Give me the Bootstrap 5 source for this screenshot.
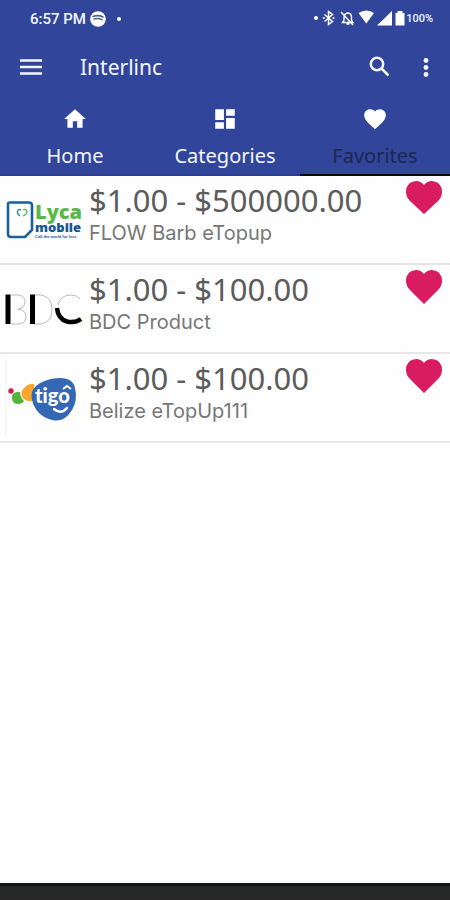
<!DOCTYPE html>
<html lang="en">
<head>
<meta charset="utf-8">
<meta name="viewport" content="width=device-width, initial-scale=1">
<title>Interlinc</title>
<link href="https://cdn.jsdelivr.net/npm/bootstrap@5.3.0/dist/css/bootstrap.min.css" rel="stylesheet">
<style>
body { font-family: "Noto Sans", sans-serif; background: #fefefe; }
svg { display: block; flex: none; }
.app-head { background: #31459b; color: #f4f7ff; }
.status { height: 38px; padding: 0 17px 0 30px; font: 500 15px/20px Roboto, sans-serif; }
.status .pct { font-size: 11px; }
.toolbar { height: 60px; padding: 0 12px 2px 20px; }
.toolbar button { color: inherit; }
.app-name { font-size: 21px; line-height: 30px; margin-left: 38px; }
.tabs a { height: 78px; padding-top: 8px; gap: 10px; color: #f4f7ff; font-size: 20px; line-height: 28px; border-bottom: 2px solid #2b3c96; }
.tabs a.active { border-color: #05070f; }
.tabs a.active span { color: #1d2751; }
.product { height: 89px; border-bottom: 2px solid #e6e6e6; padding: 5px 8px 0 5px; }
.logo { width: 84px; height: 78px; }
.logo text { font-variant-ligatures: none; }
.price { font: 400 31px/38px "Noto Sans", sans-serif; color: #5c5c5c; margin-bottom: 2px; }
.pname { font: 400 20px/24px Inter, sans-serif; color: #777; }
.fav { color: #d91b60; }
.sysbar { height: 17px; background: #282828; border-top: 3px solid #111514; }
</style>
</head>
<body class="d-flex flex-column min-vh-100">
<header class="app-head">
  <div class="status d-flex align-items-center justify-content-between">
    <div class="d-flex align-items-center gap-1">
      <span>6:57 PM</span>
      <svg width="16" height="16" viewBox="0 0 16 16"><circle cx="8" cy="8" r="7.8" fill="#fff"/><path d="M3 5.5q5-2 10 .5M4 8q4-1.300 8 .6" fill="none" stroke="#53608f" stroke-width="1.600" stroke-linecap="round"/></svg>
      <svg width="18" height="16" viewBox="0 0 18 16"><circle cx="9" cy="8" r="2" fill="#fff"/></svg>
    </div>
    <div class="d-flex align-items-center">
      <svg width="92" height="20" viewBox="0 0 92 20" fill="#fff">
        <circle cx="2" cy="9" r="2"/>
        <path d="m10.500 5.500 8 7-4 3V2.500l4 3-8 7" fill="none" stroke="#fff" stroke-width="1.500"/><circle cx="9.800" cy="9" r="1"/><circle cx="19.500" cy="9" r="1"/>
        <path d="M28.500 13.500H39l-1.500-2V8q0-3.500-3.500-4-3.500.5-4 4v3.500zM32.500 15h3M27 3l12 13" fill="none" stroke="#fff" stroke-width="1.400"/>
        <path d="M44.500 4q8-5 15.500 0L52.300 14.500z"/><path d="M63 16.500 78 2v14.500zM81.500 4h2V2h5v2h2v12.500h-9z"/>
      </svg>
      <span class="pct">100%</span>
    </div>
  </div>
  <div class="toolbar d-flex align-items-center">
    <button class="btn border-0 p-0" aria-label="Menu"><svg width="22" height="18" viewBox="0 0 22 18"><path d="M0 2.500h22M0 9h22M0 15.500h22" stroke="currentColor" stroke-width="2.300"/></svg></button>
    <h1 class="app-name fw-normal mb-0 me-auto">Interlinc</h1>
    <button class="btn border-0 p-0 me-4" aria-label="Search"><svg width="24" height="24" viewBox="0 0 24 24" fill="none" stroke="currentColor" stroke-width="2.500"><circle cx="11" cy="9" r="6.200"/><path d="m15.500 13.500 7 7"/></svg></button>
    <button class="btn border-0 p-0" aria-label="More options"><svg width="24" height="24" viewBox="0 0 24 24" fill="currentColor"><circle cx="12" cy="5.500" r="2.400"/><circle cx="12" cy="12.500" r="2.400"/><circle cx="12" cy="19.500" r="2.400"/></svg></button>
  </div>
  <nav class="tabs row g-0 text-center">
    <a href="#home" class="col d-flex flex-column align-items-center text-decoration-none"><svg width="26" height="26" viewBox="0 0 24 24" fill="#fff"><path d="M10 20v-6h4v6h5v-8h3L12 3 2 12h3v8z"/></svg><span>Home</span></a>
    <a href="#categories" class="col d-flex flex-column align-items-center text-decoration-none"><svg width="26" height="26" viewBox="0 0 24 24" fill="#fff"><path d="M3 13h8V3H3zm0 8h8v-6H3zm10 0h8V11h-8zm0-18v6h8V3z"/></svg><span>Categories</span></a>
    <a href="#favorites" class="active col d-flex flex-column align-items-center text-decoration-none" aria-current="page"><svg width="26" height="26" viewBox="0 0 24 24" fill="#fff"><path d="m12 21.350-1.450-1.320C5.400 15.360 2 12.280 2 8.500 2 5.420 4.420 3 7.500 3c1.740 0 3.410.81 4.500 2.090C13.090 3.810 14.760 3 16.500 3 19.580 3 22 5.420 22 8.500c0 3.780-3.400 6.860-8.550 11.540z"/></svg><span>Favorites</span></a>
  </nav>
</header>
<main class="flex-grow-1">
  <ul class="list-unstyled mb-0">
    <li class="product d-flex align-items-start">
      <svg class="logo" viewBox="0 0 84 78" role="img" aria-label="Lyca mobile">
        <path d="M4.500 21.500H24q3 0 3 3V49l-7 7H6q-3 0-3-3V23q0-1.500 1.500-1.500z" fill="#fff" stroke="#17629d" stroke-width="2.600"/>
        <path d="M15 35q-4-3-2-6 2-1 3 0" fill="none" stroke="#278c9d" stroke-width="1.300"/><path d="M18 29q4-2 4 2 0 2-4 4" fill="none" stroke="#58b947" stroke-width="1.300"/>
        <text x="30" y="38" font-family="Open Sans" font-weight="800" font-size="20" fill="#57b947">Lyca</text>
        <text x="30" y="51" font-family="Open Sans" font-weight="800" font-size="13" fill="#14588f">mobile</text>
        <text x="30" y="57" font-family="Liberation Sans" font-weight="700" font-size="4" fill="#14588f">Call the world for less</text>
      </svg>
      <div class="flex-grow-1"><div class="price">$1.00 - $500000.00</div><div class="pname">FLOW Barb eTopup</div></div>
      <button class="fav btn border-0 p-0" aria-label="Remove FLOW Barb eTopup from favorites"><svg width="36" height="34" viewBox="0 0 36 34" fill="currentColor"><path d="M18 33 4 20Q0 16 0 11 0 1 10 0q5 0 8 4 3-4 8-4 10 1 10 11 0 5-4 9z"/></svg></button>
    </li>
    <li class="product d-flex align-items-start">
      <svg class="logo" viewBox="0 0 84 78" role="img" aria-label="BDC">
        <g fill="none" stroke="#bbb" stroke-width="1"><path d="M6 25h8q6 1 6 7t-7 7q8 1 8 8t-8 7H6M29 25h7q11 2 11 14.500T36 54h-7M53 35q2-10 13-10 6 0 9 4"/></g>
        <path d="M3 24.500v29.500M27.500 24.500v29.500" fill="none" stroke="#000" stroke-width="5"/>
        <path d="M52 38q1 11 10 13.500 8 2 14-2.500" fill="none" stroke="#000" stroke-width="4.500"/>
      </svg>
      <div class="flex-grow-1"><div class="price">$1.00 - $100.00</div><div class="pname">BDC Product</div></div>
      <button class="fav btn border-0 p-0" aria-label="Remove BDC Product from favorites"><svg width="36" height="34" viewBox="0 0 36 34" fill="currentColor"><path d="M18 34 4 20Q0 16 0 11 0 1 10 0q5 0 8 4 3-4 8-4 10 1 10 11 0 5-4 9z"/></svg></button>
    </li>
    <li class="product d-flex align-items-start">
      <svg class="logo" viewBox="0 0 84 78" role="img" aria-label="tigo">
        <path d="M1 0v78" stroke="#f1f1f1" stroke-width="1"/>
        <circle cx="6" cy="32" r="2.700" fill="#d6184c"/>
        <path d="M29 42q-9 1-12-4-2-6 3-10 4-4 9-3z" fill="#f7a72e"/><path d="M7 40q-1-6 5-7 2 0 3 0 0 5 4 9-2 3-6 3-5 0-6-5z" fill="#51b53c"/>
        <path d="M27 41q-2-9 4-14 10-8 24-8 13 0 15 10 3 12-3 22-8 13-20 10-16-4-20-20z" fill="#3568b4"/>
        <text x="30" y="44" font-family="Lato" font-weight="900" font-size="20" fill="#fff">tigo</text>
        <path d="m58 30 4-3 4 3" fill="none" stroke="#fff" stroke-width="2"/><path d="M49 50q7 6 13-1" fill="none" stroke="#fff" stroke-width="2.500" stroke-linecap="round"/>
      </svg>
      <div class="flex-grow-1"><div class="price">$1.00 - $100.00</div><div class="pname">Belize eTopUp111</div></div>
      <button class="fav btn border-0 p-0" aria-label="Remove Belize eTopUp111 from favorites"><svg width="36" height="34" viewBox="0 0 36 34" fill="currentColor"><path d="M18 34 4 20Q0 16 0 11 0 1 10 0q5 0 8 4 3-4 8-4 10 1 10 11 0 5-4 9z"/></svg></button>
    </li>
  </ul>
</main>
<footer class="sysbar"></footer>
<script src="https://cdn.jsdelivr.net/npm/bootstrap@5.3.0/dist/js/bootstrap.bundle.min.js"></script>
</body>
</html>
